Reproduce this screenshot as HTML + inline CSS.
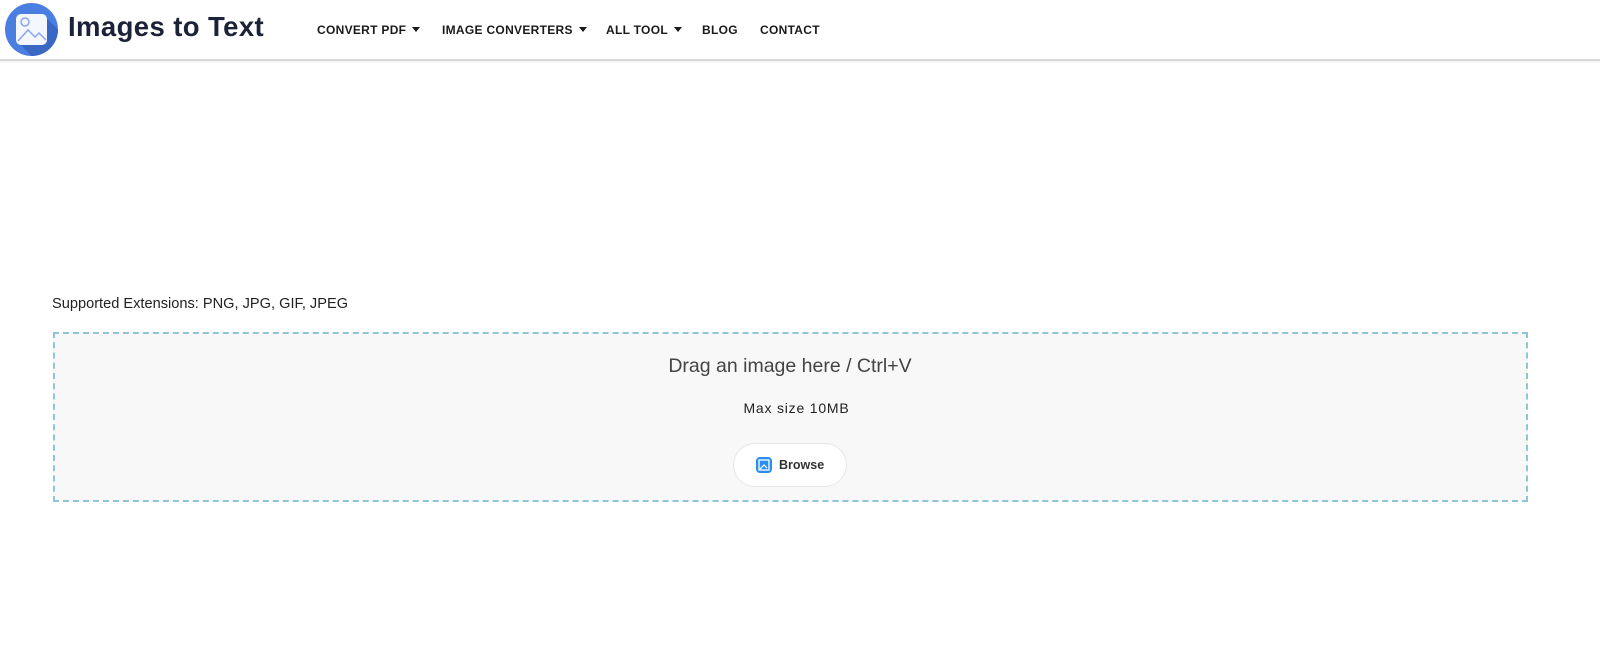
<!DOCTYPE html>
<html><head><style>
body{margin:0;background:#fff;font-family:"Liberation Sans",sans-serif;width:1600px;height:671px;overflow:hidden;position:relative}
.hdr{position:absolute;left:0;top:0;width:1600px;height:59px;border-bottom:2px solid #d8d8d8;box-shadow:0 1px 2px rgba(0,0,0,.08)}
.logo{position:absolute;left:5px;top:3px}
.brand{position:absolute;left:68px;top:11px;font-size:27.5px;font-weight:bold;color:#1c2237;letter-spacing:.4px}
.nav{position:absolute;top:23px;font-size:12px;font-weight:bold;color:#1a1a1a;letter-spacing:.3px}
.nav span.c{display:inline-block;border-left:4px solid transparent;border-right:4px solid transparent;border-top:5px solid #1a1a1a;margin-left:6px;vertical-align:2px}
.sup{position:absolute;left:52px;top:296px;font-size:14.6px;color:#222}
.box{position:absolute;left:53px;top:332px;width:1471px;height:166px;border:2px dashed #8ec6d8;background:#f8f8f8}
.drag{position:absolute;top:355px;left:0;width:1580px;text-align:center;font-size:19.5px;color:#444}
.max{position:absolute;top:400px;left:0;width:1593px;text-align:center;font-size:14px;letter-spacing:.8px;color:#222}
.btn{position:absolute;left:733px;top:443px;width:112px;height:42px;border:1px solid #e6e6e6;border-radius:22px;background:#fff}
.btn .ic{position:absolute;left:22px;top:13px;width:16px;height:16px;border-radius:4px;background:#2a8ef0}
.btn .t{position:absolute;left:45px;top:14px;font-size:12.5px;font-weight:bold;color:#333}
</style></head><body>
<div class="hdr">
<svg class="logo" width="53" height="53" viewBox="0 0 53 53"><circle cx="26.5" cy="26.5" r="26.5" fill="#4a7ee0"/><path d="M26.5 53A26.5 26.5 0 0 0 53 26.5L40 14 14 40z" fill="#3a66c4"/><rect x="11" y="11" width="31" height="31" rx="5" fill="#f5f7ff"/><circle cx="20" cy="19" r="4" fill="none" stroke="#8aa6e8" stroke-width="1.5"/><path d="M13 38l10-11 7 7 4-4 7 7" fill="none" stroke="#8aa6e8" stroke-width="1.5"/></svg>
<div class="brand">Images to Text</div>
<div class="nav" style="left:317px">CONVERT PDF<span class="c"></span></div>
<div class="nav" style="left:442px">IMAGE CONVERTERS<span class="c"></span></div>
<div class="nav" style="left:606px">ALL TOOL<span class="c"></span></div>
<div class="nav" style="left:702px">BLOG</div>
<div class="nav" style="left:760px">CONTACT</div>
</div>
<div class="sup">Supported Extensions: PNG, JPG, GIF, JPEG</div>
<div class="box"></div>
<div class="drag">Drag an image here / Ctrl+V</div>
<div class="max">Max size 10MB</div>
<div class="btn"><div class="ic"><svg width="16" height="16"><rect x="3" y="3" width="10" height="10" fill="none" stroke="#fff" stroke-width="1.3"/><path d="M4 12l4-4 3 3" stroke="#fff" fill="none" stroke-width="1.2"/></svg></div><div class="t">Browse</div></div>
</body></html>
